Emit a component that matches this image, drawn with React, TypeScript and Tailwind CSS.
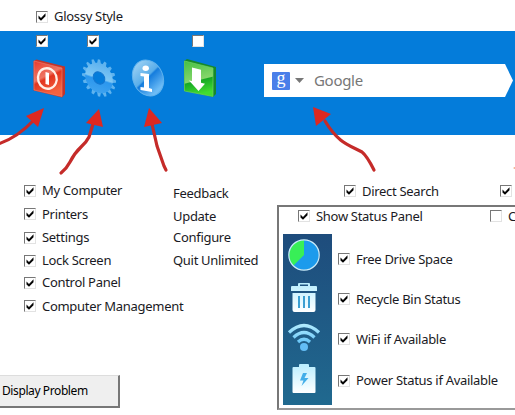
type CheckProps = { label?: string; checked?: boolean; className?: string };

const font = "font-[family-name:'Noto_Sans','Open_Sans',sans-serif]";
const label = "whitespace-nowrap text-[13px] leading-none tracking-[-0.3px] text-[#1a1a24]";

function Check({ label: text, checked = true, className = "" }: CheckProps) {
  return (
    <div className={`flex shrink-0 items-center gap-[6px] ${className}`}>
      <span className="block size-3 shrink-0 border border-b-[#e2e2e2] border-l-[#777] border-r-[#e2e2e2] border-t-[#777] bg-white">
        {checked && (
          <svg viewBox="0 0 10 10" className="block size-[10px]">
            <path d="M1.5 3.6 4 6 8.500 1.300v3L4 8.800 1.500 6.400z" fill="#050505" />
          </svg>
        )}
      </span>
      {text && <span className={label}>{text}</span>}
    </div>
  );
}

function PowerIcon() {
  return (
    <svg viewBox="0 0 34 42" className="h-[42px] w-[34px]">
      <defs>
        <linearGradient id="red" x1="0" y1="0" x2="0.4" y2="1">
          <stop offset="0" stopColor="#e8392c" />
          <stop offset="0.5" stopColor="#ee7664" />
          <stop offset="0.58" stopColor="#e2351f" />
          <stop offset="1" stopColor="#f4623f" />
        </linearGradient>
      </defs>
      <path d="m1.500 3 3-1.500L33 8.500v27.500l-3 3.500-28.500-7z" fill="#c4342a" />
      <path d="m2 3 28 7v28.500L2 32z" fill="url(#red)" stroke="#f0907c" strokeWidth=".5" />
      <ellipse cx="15.300" cy="20.500" rx="9.300" ry="10.300" transform="rotate(-18 15.300 20.500)" fill="none" stroke="#fff0e8" strokeWidth="2.300" />
      <path d="m13.500 14 3.500 1v12l-3.500-1z" fill="#fff" />
    </svg>
  );
}

function GearIcon() {
  const teeth = Array.from({ length: 16 }, (_, i) => i * 22.5);
  return (
    <svg viewBox="0 0 36 40" className="h-10 w-9">
      <defs>
        <linearGradient id="gear" x1="0.55" y1="0" x2="0.45" y2="1">
          <stop offset="0" stopColor="#5db2ef" />
          <stop offset="0.5" stopColor="#7fc8f5" />
          <stop offset="0.56" stopColor="#2b97ee" />
          <stop offset="1" stopColor="#3fa3ef" />
        </linearGradient>
      </defs>
      <g transform="translate(18 20) skewY(12)">
        {teeth.map((a) => (
          <path key={a} d="m-2.200-14 1-4.500h2.400l1 4.500z" fill="#5fb3ee" transform={`scale(.92 1) rotate(${a})`} />
        ))}
        <path d="M0-15A13.800 15 0 1 1 0 15 13.800 15 0 1 1 0-15M0-6A5.800 6 0 1 0 0 6 5.800 6 0 1 0 0-6" fill="url(#gear)" fillRule="evenodd" />
        <ellipse rx="5.800" ry="6" fill="none" stroke="#1476cf" />
      </g>
    </svg>
  );
}

function InfoIcon() {
  return (
    <svg viewBox="0 0 34 40" className="h-10 w-[34px]">
      <defs>
        <linearGradient id="info" x1="0" y1="0" x2="0.3" y2="1">
          <stop offset="0" stopColor="#a9d7f5" />
          <stop offset="0.55" stopColor="#59aeea" />
          <stop offset="0.6" stopColor="#147cdd" />
          <stop offset="1" stopColor="#6dbcf6" />
        </linearGradient>
      </defs>
      <ellipse cx="17" cy="20" rx="15" ry="18.500" transform="rotate(-24 17 20)" fill="url(#info)" stroke="#62b3ed" />
      <ellipse cx="14.700" cy="10.200" rx="3.200" ry="2.700" fill="#fff" />
      <path d="m9.500 15 8.500 1v14l3 1v3l-11.500-2v-3l3.500.5V18.500l-3.500-.5z" fill="#fff" />
    </svg>
  );
}

function DownloadIcon() {
  return (
    <svg viewBox="0 0 34 42" className="h-[42px] w-[34px]">
      <defs>
        <linearGradient id="green" x1="0" y1="0" x2="0.2" y2="1">
          <stop offset="0" stopColor="#45c044" />
          <stop offset="0.6" stopColor="#86d66b" />
          <stop offset="0.63" stopColor="#16a824" />
          <stop offset="1" stopColor="#42dc30" />
        </linearGradient>
      </defs>
      <path d="m1 3 3-2 29 8v27l-3 3-29-6z" fill="#16892b" />
      <path d="m1.500 3 28.500 7v28.500L1.500 33z" fill="url(#green)" stroke="#70d261" strokeWidth=".7" />
      <path d="m9 9.500 9 2.200v13.100l4 1-6.500 7.200L6 22.500l3 .4z" fill="#fff" />
    </svg>
  );
}

function SearchBox() {
  return (
    <div className="flex h-[33px] w-[249px] items-center bg-white pl-2 [clip-path:polygon(0_0,241px_0,249px_50%,241px_100%,0_100%)]">
      <span className="flex h-[18px] w-[18px] items-center justify-center rounded-[1px] bg-[#4a7fe9] text-[18px] leading-none text-white">
        <span className="-mt-[6px] [font-family:Liberation_Serif,serif]">g</span>
      </span>
      <svg viewBox="0 0 9 5" className="ml-[5px] h-[5px] w-[9px]">
        <path d="M0 0h9L4.500 5z" fill="#777" />
      </svg>
      <span className="ml-[10px] text-[15px] leading-none tracking-[-0.3px] text-[#777]">Google</span>
    </div>
  );
}

function StatusStrip() {
  return (
    <div className="h-[171px] w-[49px] shrink-0 bg-linear-to-b from-[#1e4c7c] to-[#20698f]">
      <svg viewBox="0 0 49 171" className="block h-[171px] w-[49px]">
        <defs>
          <linearGradient id="ice" x1="0" y1="0" x2="0" y2="1">
            <stop offset="0" stopColor="#b9eeff" />
            <stop offset="1" stopColor="#fff" />
          </linearGradient>
          <linearGradient id="wave" gradientUnits="userSpaceOnUse" x1="0" y1="89" x2="0" y2="116">
            <stop offset="0" stopColor="#b8efff" />
            <stop offset="1" stopColor="#4bb7f5" />
          </linearGradient>
        </defs>
        {/* drive usage */}
        <circle cx="21" cy="21" r="15" fill="#1c9bec" />
        <path d="M21 21V6A15 15 0 0 0 10.500 31.600z" fill="#38ef57" />
        <circle cx="21" cy="21" r="15.200" fill="none" stroke="#cceefb" strokeWidth="1.200" />
        {/* recycle bin */}
        <path d="M15 52v-2q0-1 1-1h10q1 0 1 1v2h6q1 0 1 1v4H8v-4q0-1 1-1zm2 0h8v-1.500h-8zM9.500 59h23v17q0 2-2 2h-19q-2 0-2-2z" fill="url(#ice)" fillRule="evenodd" />
        <path d="M16 62v12m5-12v12m5-12v12" stroke="#3b9fd2" strokeWidth="2" />
        {/* wireless */}
        <g fill="none" stroke="url(#wave)" strokeWidth="3.200">
          <path d="M6 98.500Q21 84.500 36 98.500" />
          <path d="M10.500 103.500Q21 93.500 31.500 103.500" />
          <path d="M15 108Q21 102.500 27 108" />
        </g>
        <circle cx="21" cy="113" r="4" fill="#63bdf5" />
        {/* battery */}
        <path d="M16 131q0-1 1-1h8q1 0 1 1v2h5.500q1 0 1 1v24q0 1-1 1h-21q-1 0-1-1v-24q0-1 1-1H16z" fill="url(#ice)" />
        <path d="m20 139-3 7.500h3.500L18.500 152l7-8h-4l2.500-5z" fill="#42aee9" />
      </svg>
    </div>
  );
}

function Arrows() {
  return (
    <svg viewBox="0 0 515 415" className="pointer-events-none absolute inset-0 h-[415px] w-[515px]">
      <g fill="none" stroke="#c52b29" strokeWidth="3.200" strokeLinecap="round" strokeLinejoin="round">
        <path d="M-2 144Q17 138 35 119" />
        <path d="M61 173q6-5 9-11c8-16 14-15 19-25l4-13" />
        <path d="m152 124 5 22 7 20 2 4" />
        <path d="M325 121c14 23 24 24 37 31q5 4 12 18" />
      </g>
      <g fill="#dd2821">
        <path d="m44 108-18 8 12 11z" />
        <path d="m99 109-13 14 17 4z" />
        <path d="m149 108-5 19 18-4z" />
        <path d="m313 107 3 19 15-12z" />
      </g>
      <path d="m515 167-2 1 2 1z" fill="#efa078" />
    </svg>
  );
}

const leftOptions = [
  { text: "My Computer", height: "h-[23px]" },
  { text: "Printers", height: "h-6" },
  { text: "Settings", height: "h-[23px]" },
  { text: "Lock Screen", height: "h-[23px]" },
  { text: "Control Panel", height: "h-[21px]" },
  { text: "Computer Management", height: "h-[26px]" },
];

export default function App() {
  return (
    <main className={`relative flex h-[415px] w-[515px] flex-col overflow-hidden bg-white ${font}`}>
      <header className="h-[31px] shrink-0 pl-9 pt-[10px]">
        <Check label="Glossy Style" />
      </header>

      <section className="flex h-[104px] shrink-0 bg-[#047cda]">
        <div className="w-[264px] shrink-0">
          <div className="flex h-[27px] items-start pl-9 pt-1">
            <Check className="w-[51px]" />
            <Check className="w-[105px]" />
            <Check checked={false} />
          </div>
          <div className="flex pl-8">
            <div className="w-[49px]"><PowerIcon /></div>
            <div className="w-[50px]"><GearIcon /></div>
            <div className="w-[52px]"><InfoIcon /></div>
            <DownloadIcon />
          </div>
        </div>
        <div className="pt-[33px]">
          <SearchBox />
        </div>
      </section>

      <div className="flex h-[280px] shrink-0">
        <div className="flex w-[277px] shrink-0 flex-col">
          <div className="flex pt-11">
            <div className="w-[149px] pl-6">
              {leftOptions.map((o) => (
                <Check key={o.text} label={o.text} className={o.height} />
              ))}
            </div>
            <div className="flex flex-col pl-6 pt-[3px]">
              <span className={`${label} flex h-[23px] items-center`}>Feedback</span>
              <span className={`${label} flex h-[22px] items-center`}>Update</span>
              <span className={`${label} flex h-[21px] items-center`}>Configure</span>
              <span className={`${label} flex h-6 items-center`}>Quit Unlimited</span>
            </div>
          </div>
          <button className="mt-[56px] flex h-[33px] w-[120px] items-center border-b-2 border-r-2 border-t border-b-[#777] border-r-[#777] border-t-[#ddd] bg-[#efefef] pl-[2px]">
            <span className="whitespace-nowrap text-[12px] leading-none tracking-[-0.4px] text-black">Display Problem</span>
          </button>
        </div>

        <div className="flex w-[238px] shrink-0 flex-col">
          <div className="flex h-[70px] pl-[67px] pt-[49px]">
            <Check label="Direct Search" className="h-[14px] w-[156px]" />
            <Check className="h-[14px]" />
          </div>
          <div className="h-[205px] w-[240px] border-2 border-b-[#999] border-l-[#777] border-t-[#777] pl-1">
            <div className="flex h-[27px] pl-[15px] pt-[2px]">
              <Check label="Show Status Panel" className="h-[14px] w-[192px]" />
              <Check label="C" checked={false} className="h-[14px]" />
            </div>
            <div className="flex gap-[6px]">
              <StatusStrip />
              <div className="flex flex-col pt-[5px]">
                <Check label="Free Drive Space" className="h-10" />
                <Check label="Recycle Bin Status" className="h-10" />
                <Check label="WiFi if Available" className="h-10" />
                <Check label="Power Status if Available" className="h-[43px]" />
              </div>
            </div>
          </div>
        </div>
      </div>

      <Arrows />
    </main>
  );
}
